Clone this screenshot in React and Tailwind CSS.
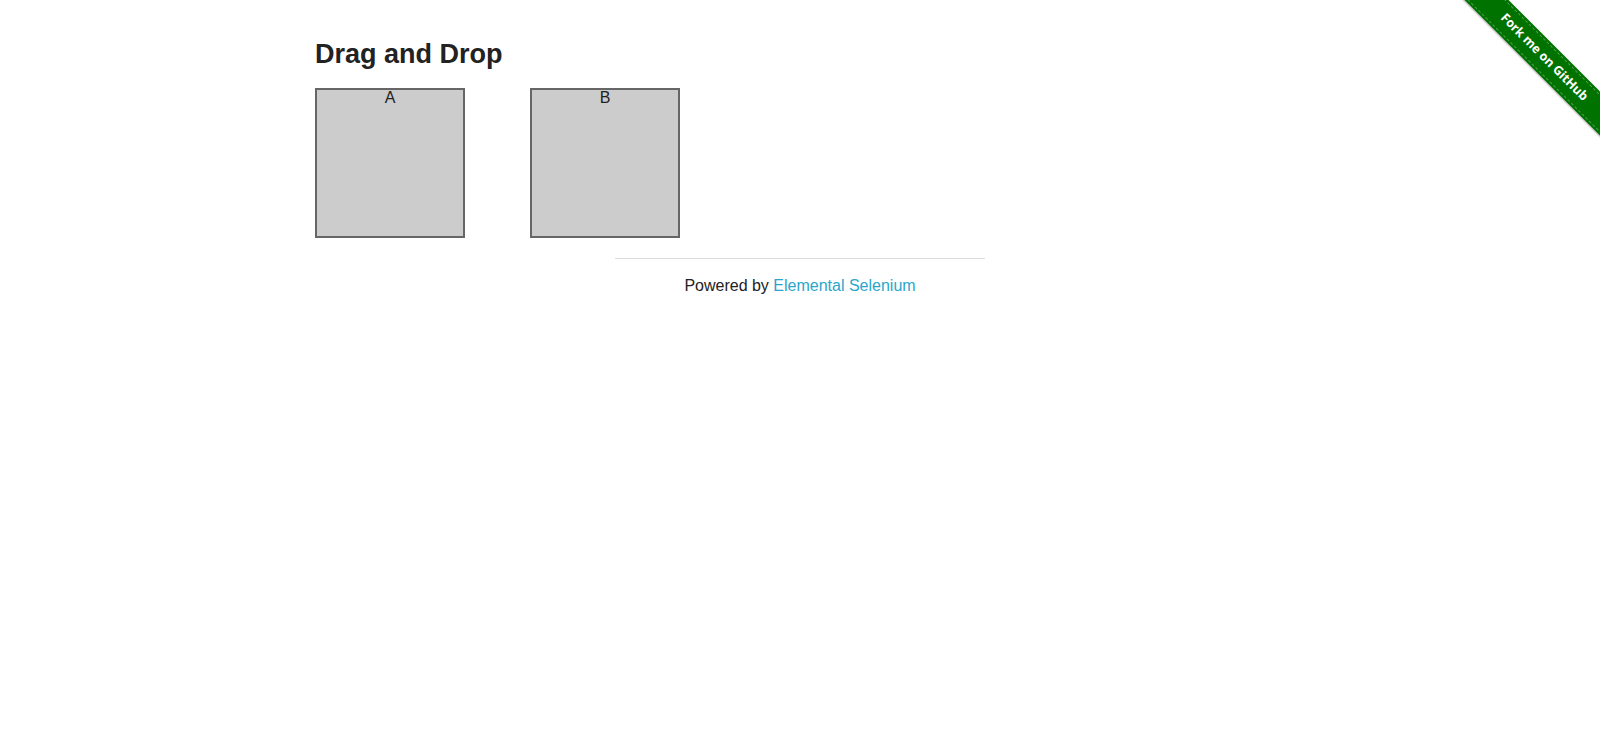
import React from 'react';

const ForkRibbon = () => (
  <a
    href="#"
    className="absolute top-0 right-0 w-[149px] h-[149px] overflow-hidden block"
    aria-label="Fork me on GitHub"
  >
    {/* diagonal band */}
    <div className="absolute left-[-17px] top-[42px] w-[220px] h-[31px] rotate-45 bg-[#007200] shadow-[0_1px_2px_rgba(0,0,0,0.35)] flex items-center justify-center">
      <div className="absolute inset-x-0 top-[2px] bottom-[2px] border-y border-dashed border-white/30"></div>
      <span
        className="relative text-white text-[12.5px] font-bold leading-none"
        style={{ fontFamily: '"Open Sans", "Noto Sans", sans-serif' }}
      >
        Fork me on GitHub
      </span>
    </div>
  </a>
);

const Column = ({ label }) => (
  <div className="w-[150px] h-[150px] border-2 border-[#666666] bg-[#cccccc] cursor-move">
    <header className="text-center text-[16px] leading-[16px] text-[#222222]">{label}</header>
  </div>
);

export default function App() {
  return (
    <div
      className="relative min-h-[745px] bg-white text-[#222222]"
      style={{ fontFamily: '"Liberation Sans", Arial, sans-serif' }}
    >
      <ForkRibbon />

      <div className="max-w-[1000px] mx-auto px-[15px] pt-[38px]">
        <h3 className="text-[27px] leading-[32px] font-bold text-[#222222]">Drag and Drop</h3>
        <div className="flex gap-[65px] mt-[18px]">
          <Column label="A" />
          <Column label="B" />
        </div>
      </div>

      <div className="w-[400px] mx-auto px-[15px] mt-[20px]">
        <hr className="border-0 border-t border-[#dddddd]" />
        <div className="text-center text-[16px] leading-[24px] mt-[15px]">
          Powered by{' '}
          <a href="#" className="text-[#2ba6cb]">
            Elemental Selenium
          </a>
        </div>
      </div>
    </div>
  );
}
